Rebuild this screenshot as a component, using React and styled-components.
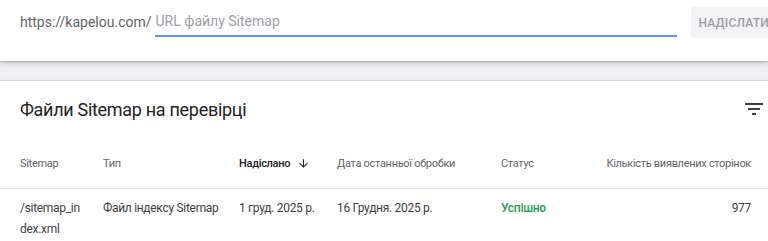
import React from 'react';
import styled, { createGlobalStyle } from 'styled-components';

const GlobalStyle = createGlobalStyle`
  body {
    margin: 0;
    background: #eef0f3;
    font-family: Roboto, "Liberation Sans", Arial, sans-serif;
    overflow: hidden;
  }
`;

const TopBar = styled.div`
  box-sizing: border-box;
  height: 61px;
  padding: 7px 0 0 20px;
  background: #fff;
  display: flex;
  align-items: flex-start;
  box-shadow: 0 1px 2px rgba(60, 64, 67, 0.35), 0 2px 6px rgba(60, 64, 67, 0.15);
  position: relative;
  z-index: 1;
`;

const Prefix = styled.span`
  flex-shrink: 0;
  line-height: 31px;
  font-size: 14px;
  color: #5f6368;
  margin-right: 3px;
`;

const UrlInput = styled.input`
  box-sizing: border-box;
  flex-shrink: 0;
  width: 522px;
  height: 30px;
  padding: 0 1px;
  border: 0;
  border-bottom: 2px solid #5b95f5;
  outline: none;
  background: transparent;
  font: 14px Roboto, "Liberation Sans", Arial, sans-serif;
  color: #202124;

  &::placeholder {
    color: #9aa0a6;
  }
`;

const SendButton = styled.button`
  flex-shrink: 0;
  height: 31px;
  margin-left: 14px;
  padding: 0 8px;
  border: 0;
  border-radius: 4px;
  background: #f1f3f4;
  color: #9aa0a6;
  font: 500 12px Roboto, "Liberation Sans", Arial, sans-serif;
  letter-spacing: 0.2px;
  text-transform: uppercase;
  white-space: nowrap;
`;

const Card = styled.div`
  margin-top: 20px;
  background: #fff;
  min-height: 200px;
  box-shadow: 0 -1px 1px rgba(60, 64, 67, 0.12);
`;

const TitleRow = styled.div`
  display: flex;
  align-items: center;
  justify-content: space-between;
  padding: 17px 2px 0 20px;
`;

const Title = styled.h2`
  margin: 0;
  font-size: 18px;
  font-weight: 400;
  letter-spacing: -0.3px;
  line-height: 24px;
  color: #202124;
`;

const IconButton = styled.span`
  display: flex;
  width: 24px;
  height: 24px;
  margin-top: -3px;
  color: #3c4043;
`;

const Row = styled.div`
  display: grid;
  grid-template-columns: 83px 136px 98px 164px 103px 1fr;
  padding: 0 17px 0 20px;
  align-items: ${(p) => (p.head ? 'center' : 'start')};
  height: ${(p) => (p.head ? '50px' : 'auto')};
  margin-top: ${(p) => (p.head ? '16px' : '0')};
  padding-top: ${(p) => (p.head ? '0' : '9px')};
  border-bottom: ${(p) => (p.head ? '1px solid #e0e0e0' : '0')};
`;

const HeadCell = styled.div`
  display: flex;
  align-items: center;
  justify-content: ${(p) => (p.right ? 'flex-end' : 'flex-start')};
  font-size: 11px;
  letter-spacing: -0.3px;
  color: ${(p) => (p.active ? '#202124' : '#5f6368')};
  font-weight: ${(p) => (p.active ? 500 : 400)};
  white-space: nowrap;

  & svg {
    margin-left: 7px;
  }
`;

const Cell = styled.div`
  font-size: 12px;
  letter-spacing: -0.3px;
  line-height: 21px;
  color: ${(p) => (p.ok ? '#1e9e4f' : '#3c4043')};
  font-weight: ${(p) => (p.ok ? 500 : 400)};
  text-align: ${(p) => (p.right ? 'right' : 'left')};
  padding-right: ${(p) => (p.wrap ? '21px' : '0')};
  word-break: ${(p) => (p.wrap ? 'break-all' : 'normal')};
`;

const FilterIcon = () => (
  <svg width="24" height="24" viewBox="0 0 24 24" fill="currentColor">
    <path d="M10 18h4v-2h-4v2zM3 6v2h18V6H3zm3 7h12v-2H6v2z" />
  </svg>
);

const ArrowDown = () => (
  <svg width="13" height="13" viewBox="0 0 24 24" fill="currentColor">
    <path d="M20 12l-1.41-1.41L13 16.17V4h-2v12.17l-5.58-5.59L4 12l8 8 8-8z" />
  </svg>
);

const App = () => (
  <>
    <GlobalStyle />
    <TopBar>
      <Prefix>https://kapelou.com/</Prefix>
      <UrlInput placeholder="URL файлу Sitemap" />
      <SendButton>Надіслати</SendButton>
    </TopBar>
    <Card>
      <TitleRow>
        <Title>Файли Sitemap на перевірці</Title>
        <IconButton>
          <FilterIcon />
        </IconButton>
      </TitleRow>
      <Row head>
        <HeadCell>Sitemap</HeadCell>
        <HeadCell>Тип</HeadCell>
        <HeadCell active>
          Надіслано
          <ArrowDown />
        </HeadCell>
        <HeadCell>Дата останньої обробки</HeadCell>
        <HeadCell>Статус</HeadCell>
        <HeadCell right>Кількість виявлених сторінок</HeadCell>
      </Row>
      <Row>
        <Cell wrap>/sitemap_index.xml</Cell>
        <Cell>Файл індексу Sitemap</Cell>
        <Cell>1 груд. 2025 р.</Cell>
        <Cell>16 Грудня. 2025 р.</Cell>
        <Cell ok>Успішно</Cell>
        <Cell right>977</Cell>
      </Row>
    </Card>
  </>
);

export default App;
